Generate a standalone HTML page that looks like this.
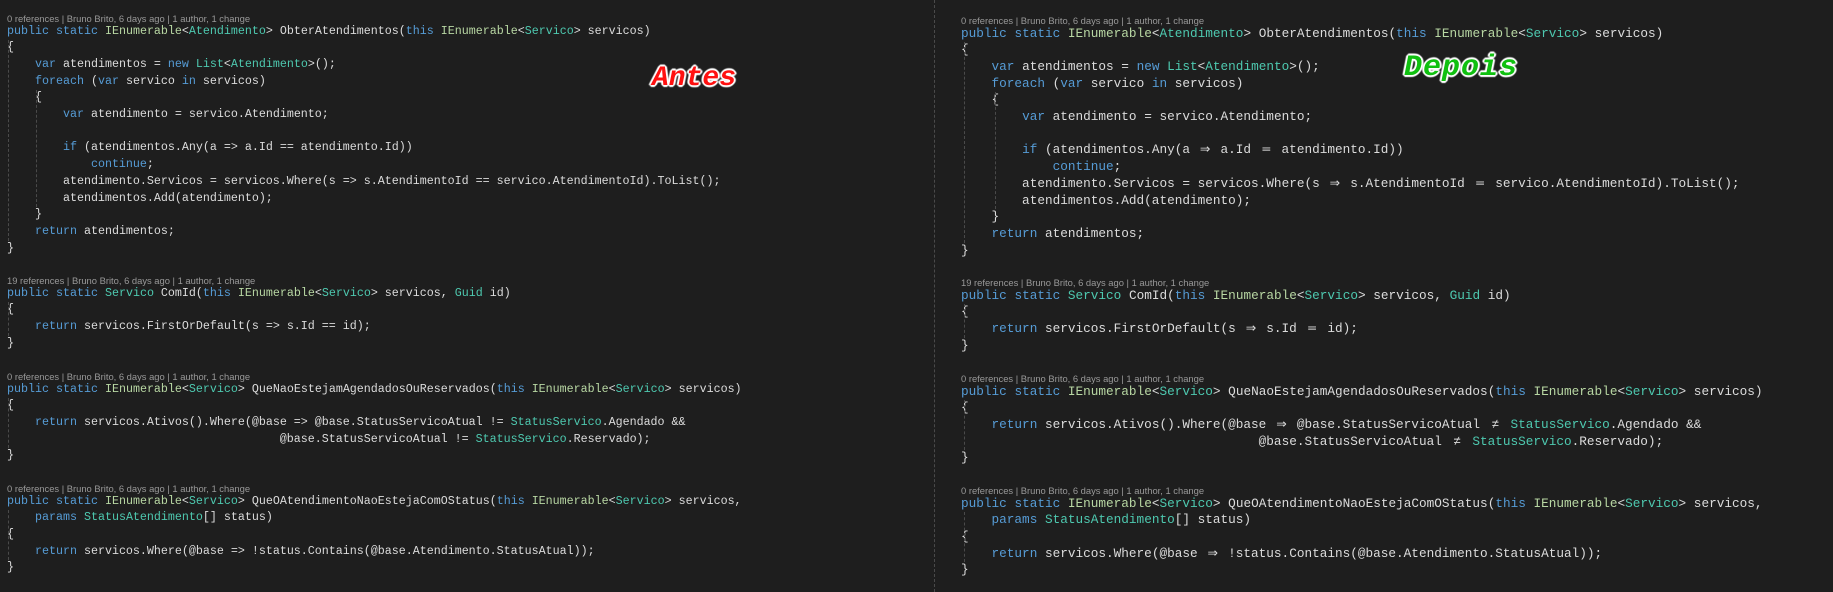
<!DOCTYPE html>
<html><head><meta charset="utf-8">
<style>
html,body{margin:0;padding:0;background:#1e1e1e;width:1833px;height:592px;overflow:hidden;position:relative}
.pane{position:absolute;top:0;height:592px}
.ln{position:absolute;left:0;white-space:pre;color:#dcdcdc;height:17px;line-height:17px}
#L .ln{font:11.67px "Liberation Mono",monospace}
#R .ln{font:12.73px "Liberation Mono",monospace}
.cl{position:absolute;left:0;white-space:pre;color:#999;font:9.4px "Liberation Sans",sans-serif;line-height:12px}
.k{color:#569cd6}.t{color:#4ec9b0}.i{color:#b8d7a3}
.lg{display:inline-block;width:2ch;text-align:center}
.g{position:absolute;width:0;border-left:1px dashed #4a4a4a}
.tag{position:absolute;font:italic bold 28px "Liberation Mono",monospace;
 text-shadow:0 0 2px #fff,0 0 2px #fff,1px 1px 1px #fff,-1px -1px 1px #fff,1px -1px 1px #fff,-1px 1px 1px #fff,2px 0 1px #fff,-2px 0 1px #fff,0 2px 1px #fff,0 -2px 1px #fff}
</style></head><body>
<div class="g" style="left:934px;top:0;height:592px"></div>
<div class="pane" id="L" style="left:7px"></div>
<div class="pane" id="R" style="left:961px;top:2px"></div>
<div class="tag" style="left:652px;top:63px;color:#ff1010">Antes</div>
<div class="tag" style="left:1404px;top:51px;color:#10c010;font-size:30px;letter-spacing:1px">Depois</div>
<script>
var P='<span class="k">public</span> <span class="k">static</span> ';
var IE=function(t){return '<span class="i">IEnumerable</span>&lt;<span class="t">'+t+'</span>&gt;';};
var K=function(s){return '<span class="k">'+s+'</span>';};
var T=function(s){return '<span class="t">'+s+'</span>';};
var blocks=[
 {y:32,h:'0 references | Bruno Brito, 6 days ago | 1 author, 1 change',lines:[
  P+IE('Atendimento')+' ObterAtendimentos('+K('this')+' '+IE('Servico')+' servicos)',
  '{',
  '    '+K('var')+' atendimentos = '+K('new')+' '+T('List')+'&lt;'+T('Atendimento')+'&gt;();',
  '    '+K('foreach')+' ('+K('var')+' servico '+K('in')+' servicos)',
  '    {',
  '        '+K('var')+' atendimento = servico.Atendimento;',
  '',
  '        '+K('if')+' (atendimentos.Any(a @A a.Id @E atendimento.Id))',
  '            '+K('continue')+';',
  '        atendimento.Servicos = servicos.Where(s @A s.AtendimentoId @E servico.AtendimentoId).ToList();',
  '        atendimentos.Add(atendimento);',
  '    }',
  '    '+K('return')+' atendimentos;',
  '}'],guides:[[0,1,13],[4,4,11]]},
 {y:294,h:'19 references | Bruno Brito, 6 days ago | 1 author, 1 change',lines:[
  P+T('Servico')+' ComId('+K('this')+' '+IE('Servico')+' servicos, '+T('Guid')+' id)',
  '{',
  '    '+K('return')+' servicos.FirstOrDefault(s @A s.Id @E id);',
  '}'],guides:[[0,1,3]]},
 {y:390,h:'0 references | Bruno Brito, 6 days ago | 1 author, 1 change',lines:[
  P+IE('Servico')+' QueNaoEstejamAgendadosOuReservados('+K('this')+' '+IE('Servico')+' servicos)',
  '{',
  '    '+K('return')+' servicos.Ativos().Where(@base @A @base.StatusServicoAtual @N '+T('StatusServico')+'.Agendado &amp;&amp;',
  '                                       @base.StatusServicoAtual @N '+T('StatusServico')+'.Reservado);',
  '}'],guides:[[0,1,4]]},
 {y:502,h:'0 references | Bruno Brito, 6 days ago | 1 author, 1 change',lines:[
  P+IE('Servico')+' QueOAtendimentoNaoEstejaComOStatus('+K('this')+' '+IE('Servico')+' servicos,',
  '    '+K('params')+' '+T('StatusAtendimento')+'[] status)',
  '{',
  '    '+K('return')+' servicos.Where(@base @A !status.Contains(@base.Atendimento.StatusAtual));',
  '}'],guides:[[0,1,4]]}
];
function build(id,cw,lig){
 var el=document.getElementById(id),h='',LH=16.7;
 blocks.forEach(function(b){
  h+='<div class="cl" style="top:'+(b.y-13-6)+'px">'+b.h+'</div>';
  b.lines.forEach(function(l,n){
   var s=lig?l.replace(/@A/g,'<span class="lg">⇒</span>').replace(/@E/g,'<span class="lg">═</span>').replace(/@N/g,'<span class="lg">≠</span>')
            :l.replace(/@A/g,'=&gt;').replace(/@E/g,'==').replace(/@N/g,'!=');
   h+='<div class="ln" style="top:'+(b.y+n*LH-8.5).toFixed(1)+'px">'+s+'</div>';
  });
  b.guides.forEach(function(g){
   var x=g[0]*cw+(lig?3:1),t=b.y+(g[1]-0.5)*LH,bt=b.y+(g[2]-0.5)*LH;
   h+='<div class="g" style="left:'+x+'px;top:'+t+'px;height:'+(bt-t)+'px"></div>';
  });
 });
 el.innerHTML=h;
}
build('L',7,false);
build('R',7.64,true);
</script>
</body></html>
